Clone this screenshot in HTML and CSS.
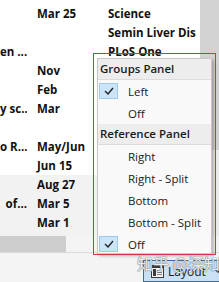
FILE: index.html
```html
<!DOCTYPE html>
<html>
<head>
<meta charset="utf-8">
<link rel="stylesheet" href="styles.css">
</head>
<body>
<div class="window">
  <div class="main">
    <div class="list">
      <div class="row"><span class="c-title"></span><span class="c-date">Mar 25</span><span class="c-journal">Science</span></div>
      <div class="row"><span class="c-title"></span><span class="c-date"></span><span class="c-journal">Semin Liver Dis</span></div>
      <div class="row"><span class="c-title">en ...</span><span class="c-date"></span><span class="c-journal">PLoS One</span></div>
      <div class="row"><span class="c-title"></span><span class="c-date">Nov</span><span class="c-journal"></span></div>
      <div class="row"><span class="c-title"></span><span class="c-date">Feb</span><span class="c-journal"></span></div>
      <div class="row"><span class="c-title">y sc...</span><span class="c-date">Mar</span><span class="c-journal"></span></div>
      <div class="row"><span class="c-title"></span><span class="c-date"></span><span class="c-journal"></span></div>
      <div class="row"><span class="c-title">o R...</span><span class="c-date">May/Jun</span><span class="c-journal"></span></div>
      <div class="row"><span class="c-title"></span><span class="c-date">Jun 15</span><span class="c-journal"></span></div>
      <div class="row shaded"><span class="c-title"></span><span class="c-date">Aug 27</span><span class="c-journal"></span></div>
      <div class="row shaded"><span class="c-title">of...</span><span class="c-date">Mar 5</span><span class="c-journal"></span></div>
      <div class="row shaded"><span class="c-title"></span><span class="c-date">Mar 1</span><span class="c-journal"></span></div>
      <div class="filler"></div>
    </div>
    <div class="vscroll"><div class="vthumb"></div></div>
  </div>
  <div class="hscroll"><div class="hthumb"></div></div>
  <div class="statusbar">
    <div class="layout-btn">
      <svg class="layout-icon" width="13" height="13" viewBox="0 0 13 13">
        <rect x="0.5" y="0.5" width="12" height="12" fill="#f4f4f4" stroke="#3a3a3a"/>
        <rect x="1" y="1" width="11" height="2" fill="#3a3a3a"/>
        <rect x="2" y="4" width="3" height="7" fill="#3a3a3a"/>
        <line x1="6" y1="5.5" x2="11" y2="5.5" stroke="#7a7a7a"/>
        <line x1="6" y1="7.5" x2="11" y2="7.5" stroke="#7a7a7a"/>
        <line x1="6" y1="9.5" x2="11" y2="9.5" stroke="#7a7a7a"/>
      </svg>
      <span class="layout-label">Layout</span>
      <span class="layout-arrow"></span>
    </div>
  </div>

  <div class="menu">
    <div class="menu-header">Groups Panel</div>
    <div class="menu-item checked"><span class="check"><svg width="10" height="8" viewBox="0 0 10 8"><polyline points="1,4 4,7 9,1" fill="none" stroke="#222" stroke-width="1.4"/></svg></span><span class="label">Left</span></div>
    <div class="menu-item"><span class="check"></span><span class="label">Off</span></div>
    <div class="menu-header">Reference Panel</div>
    <div class="menu-item"><span class="check"></span><span class="label">Right</span></div>
    <div class="menu-item"><span class="check"></span><span class="label">Right - Split</span></div>
    <div class="menu-item"><span class="check"></span><span class="label">Bottom</span></div>
    <div class="menu-item"><span class="check"></span><span class="label">Bottom - Split</span></div>
    <div class="menu-item checked"><span class="check"><svg width="10" height="8" viewBox="0 0 10 8"><polyline points="1,4 4,7 9,1" fill="none" stroke="#222" stroke-width="1.4"/></svg></span><span class="label">Off</span></div>
  </div>
  <div class="annot"></div>
  <div class="watermark">知乎 @探知</div>
</div>
</body>
</html>
```
FILE: styles.css
```css
html, body {
  margin: 0;
  padding: 0;
}
body {
  width: 219px;
  height: 282px;
  overflow: hidden;
  background: #fff;
  font-family: "Open Sans", "Noto Sans CJK SC", sans-serif;
}
.window {
  position: relative;
  width: 219px;
  height: 282px;
  display: flex;
  flex-direction: column;
  overflow: hidden;
}
.main {
  display: flex;
  height: 238px;
}
.list {
  width: 200px;
  display: flex;
  flex-direction: column;
  padding-top: 4px;
  box-sizing: border-box;
  background: #fff;
}
.row {
  height: 19px;
  display: flex;
  align-items: center;
  font-weight: 700;
  font-size: 11.5px;
  color: #111;
  white-space: nowrap;
}
.row.shaded {
  background: #f2f2f2;
}
.c-title {
  width: 27px;
  text-align: right;
  overflow: hidden;
  flex: none;
}
.c-date {
  width: 71px;
  margin-left: 10px;
  flex: none;
}
.c-journal {
  flex: 1;
  overflow: hidden;
}
.filler {
  flex: 1;
  background: #f2f2f2;
}
.vscroll {
  width: 19px;
  background: #ececec;
}
.vthumb {
  height: 150px;
  background: #d2d2d2;
}
.hscroll {
  height: 16px;
  background: #f4f4f4;
  display: flex;
  align-items: stretch;
}
.hthumb {
  width: 66px;
  background: #cdcdcd;
}
.statusbar {
  flex: 1;
  border-top: 1px solid #dadada;
  background: #f4f4f4;
  padding: 7px 0 0 143px;
}
.layout-btn {
  width: 80px;
  height: 22px;
  box-sizing: border-box;
  border: 1px solid #3d6e99;
  background: #c9e0f5;
  display: flex;
  align-items: center;
  padding-left: 7px;
}
.layout-icon {
  flex: none;
}
.layout-label {
  margin-left: 4px;
  font-size: 12px;
  color: #1a1a1a;
}
.layout-arrow {
  margin-left: 9px;
  width: 0;
  height: 0;
  border-left: 3px solid transparent;
  border-right: 3px solid transparent;
  border-top: 3px solid #222;
}
.annot {
  position: absolute;
  left: 93px;
  top: 53px;
  width: 123px;
  height: 202px;
  box-sizing: border-box;
  border: 1px solid #d2353d;
}
.menu {
  position: absolute;
  left: 97px;
  top: 58px;
  width: 115px;
  height: 196px;
  overflow: hidden;
  box-sizing: border-box;
  border: 1px solid #c8c8c8;
  background: #f9f9f9;
  box-shadow: 2px 2px 3px rgba(0,0,0,0.25);
  font-size: 11.5px;
  color: #1a1a1a;
}
.menu-header {
  height: 20px;
  line-height: 20px;
  padding-left: 2px;
  background: #ededed;
  border-bottom: 1px solid #dcdcdc;
  font-weight: 600;
  white-space: nowrap;
}
.menu-item {
  height: 22px;
  display: flex;
  align-items: center;
  white-space: nowrap;
}
.check {
  width: 19px;
  height: 16px;
  margin-left: 1px;
  box-sizing: border-box;
  display: flex;
  align-items: center;
  justify-content: center;
  flex: none;
}
.menu-item.checked .check {
  background: #cce4f7;
  border: 1px solid #9ccaee;
}
.label {
  margin-left: 10px;
}
.watermark {
  position: absolute;
  left: 137px;
  top: 251px;
  font-size: 16px;
  font-family: "Noto Sans CJK SC", sans-serif;
  color: rgba(255,255,255,0.9);
  text-shadow: 0 0 1px #666, 0 0 1px #666;
  white-space: nowrap;
  pointer-events: none;
}
```
